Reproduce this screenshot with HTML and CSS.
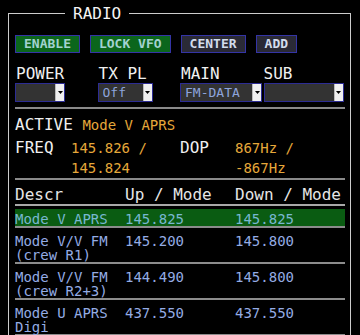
FILE: index.html
```html
<!DOCTYPE html>
<html lang="en">
<head>
    <meta charset="UTF-8">
    <meta name="viewport" content="width=device-width, initial-scale=1.0">
    <title>Radio</title>
    <link rel="stylesheet" href="styles.css">
</head>
<body>
    <fieldset class="radio">
        <legend>RADIO</legend>

        <div class="actions">
            <button class="btn btn-on">ENABLE</button>
            <button class="btn btn-on">LOCK VFO</button>
            <button class="btn">CENTER</button>
            <button class="btn">ADD</button>
        </div>

        <div class="controls">
            <div class="control">
                <label>POWER</label>
                <div class="sel sel-power">
                    <select><option></option><option>LOW</option><option>HIGH</option></select>
                    <span class="arrow"><svg width="5" height="3" viewBox="0 0 5 3"><path d="M0 0h5L2.5 3z" fill="#000"/></svg></span>
                </div>
            </div>
            <div class="control">
                <label>TX PL</label>
                <div class="sel sel-pl">
                    <select><option>Off</option><option>67.0</option></select>
                    <span class="arrow"><svg width="5" height="3" viewBox="0 0 5 3"><path d="M0 0h5L2.5 3z" fill="#000"/></svg></span>
                </div>
            </div>
            <div class="control">
                <label>MAIN</label>
                <div class="sel sel-main">
                    <select><option>FM-DATA</option><option>FM</option><option>USB</option></select>
                    <span class="arrow"><svg width="5" height="3" viewBox="0 0 5 3"><path d="M0 0h5L2.5 3z" fill="#000"/></svg></span>
                </div>
            </div>
            <div class="control">
                <label>SUB</label>
                <div class="sel sel-sub">
                    <select><option></option><option>FM</option></select>
                    <span class="arrow"><svg width="5" height="3" viewBox="0 0 5 3"><path d="M0 0h5L2.5 3z" fill="#000"/></svg></span>
                </div>
            </div>
        </div>

        <div class="active">
            <span class="label">ACTIVE</span> <span class="value">Mode V APRS</span>
        </div>

        <div class="tuning">
            <span class="label">FREQ</span>
            <span class="value">145.826 / 145.824</span>
            <span class="label">DOP</span>
            <span class="value">867Hz / -867Hz</span>
        </div>

        <div class="modes">
            <div class="mode-head">
                <span>Descr</span>
                <span>Up / Mode</span>
                <span>Down / Mode</span>
            </div>
            <div class="mode-row selected">
                <div class="cells">
                    <span>Mode V APRS</span>
                    <span>145.825</span>
                    <span>145.825</span>
                </div>
            </div>
            <div class="mode-row">
                <div class="cells">
                    <span>Mode V/V FM (crew R1)</span>
                    <span>145.200</span>
                    <span>145.800</span>
                </div>
            </div>
            <div class="mode-row">
                <div class="cells">
                    <span>Mode V/V FM (crew R2+3)</span>
                    <span>144.490</span>
                    <span>145.800</span>
                </div>
            </div>
            <div class="mode-row">
                <div class="cells">
                    <span>Mode U APRS Digi</span>
                    <span>437.550</span>
                    <span>437.550</span>
                </div>
            </div>
        </div>
    </fieldset>
</body>
</html>
```

FILE: styles.css
```css
body {
    margin: 0;
    background: #000;
    color: #f0f0f0;
    font-family: "DejaVu Sans Mono", monospace;
    font-size: 16px;
}
.radio {
    margin: 4px 9px 0 8px;
    padding: 12px 5px 0 6px;
    border: 1px solid #cccccc;
    min-width: 0;
}
.radio legend {
    margin-left: 50px;
    padding: 0 8px;
    line-height: 19px;
    color: #f4f4f4;
}
.actions {
    display: flex;
    gap: 10px;
}
.btn {
    height: 18px;
    margin: 0;
    padding: 0 8px;
    border: 1px solid #3434a6;
    background: #2a2a36;
    color: #d2dcec;
    font-family: "DejaVu Sans Mono", monospace;
    font-weight: bold;
    font-size: 13px;
    line-height: 16px;
}
.btn-on {
    background: #0b661c;
    color: #a2d2d0;
}
.controls {
    display: grid;
    grid-template-columns: repeat(4, 82.5px);
    margin-top: 11px;
    padding-bottom: 5px;
    border-bottom: 2px solid #8a8a8a;
}
.control label {
    display: block;
    line-height: 19px;
    padding-left: 1px;
}
.sel {
    display: flex;
    height: 19px;
    box-sizing: border-box;
    border: 1px solid #2c2c94;
    background: #333;
}
.sel select {
    flex: 1;
    min-width: 0;
    appearance: none;
    border: none;
    outline: none;
    margin: 0;
    padding: 0 0 0 4px;
    background: #333;
    color: #8ea4dc;
    font-family: "DejaVu Sans Mono", monospace;
    font-size: 13px;
}
.sel .arrow {
    width: 8px;
    display: flex;
    align-items: center;
    justify-content: center;
    background: #f0f0f0;
    border-left: 1px solid #bbb;
}
.sel-power { width: 50px; }
.sel-pl { width: 55px; }
.sel-main { width: 82px; }
.sel-sub { width: 80px; margin-left: 1px; }
.active {
    padding-top: 6px;
    line-height: 19px;
}
.value {
    color: #e6a83a;
    font-size: 14px;
}
.tuning {
    display: grid;
    grid-template-columns: 56px 109px 55px 1fr;
    align-items: baseline;
    margin-top: 3px;
    border-bottom: 2px solid #8a8a8a;
}
.tuning .label {
    line-height: 19px;
}
.tuning .value {
    line-height: 20px;
}
.modes {
    padding-top: 5px;
}
.mode-head,
.cells {
    display: grid;
    grid-template-columns: 110px 110px 110px;
}
.mode-head {
    line-height: 19px;
    color: #e6e6e6;
    border-bottom: 2px solid #a8a8a8;
}
.mode-row {
    padding-top: 3px;
    border-bottom: 2px solid #8c8c8c;
}
.cells {
    padding-top: 3px;
    font-size: 14px;
    line-height: 14px;
    color: #94ace4;
}
.selected .cells {
    background: #0a5c12;
    color: #78b8d0;
}
```
